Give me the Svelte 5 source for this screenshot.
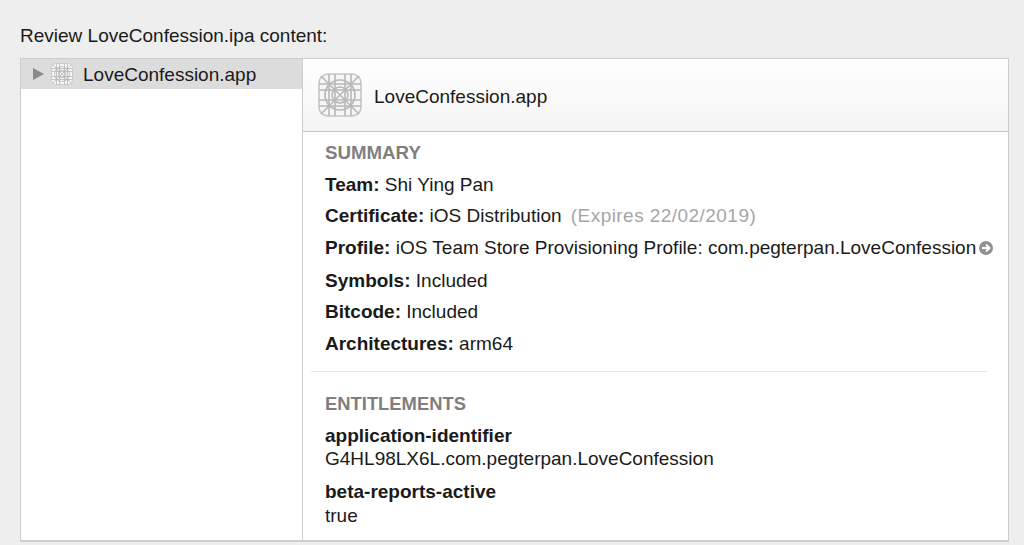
<script>
  const summary = [
    { label: 'Team:', value: 'Shi Ying Pan' },
    { label: 'Certificate:', value: 'iOS Distribution', note: '(Expires 22/02/2019)' },
    { label: 'Profile:', value: 'iOS Team Store Provisioning Profile: com.pegterpan.LoveConfession', link: true },
    { label: 'Symbols:', value: 'Included' },
    { label: 'Bitcode:', value: 'Included' },
    { label: 'Architectures:', value: 'arm64' }
  ];
  const entitlements = [
    { key: 'application-identifier', value: 'G4HL98LX6L.com.pegterpan.LoveConfession' },
    { key: 'beta-reports-active', value: 'true' }
  ];
</script>

{#snippet appIcon(size)}
  <svg class="app-icon" width={size} height={size} viewBox="0 0 44 44" fill="none" stroke="#b8b8b8" stroke-width="1.6">
    <rect x="1" y="1" width="42" height="42" rx="9" fill="#f6f6f6" stroke="#c6c6c6" />
    <path d="M1 11H43M1 17H43M1 27H43M1 33H43M11 1V43M17 1V43M27 1V43M33 1V43M3 3L41 41M41 3L3 41" />
    <circle cx="22" cy="22" r="15" />
    <circle cx="22" cy="22" r="8" />
  </svg>
{/snippet}

<div class="page">
  <p class="heading">Review LoveConfession.ipa content:</p>
  <div class="panel">
    <aside class="sidebar">
      <div class="tree-row">
        <span class="disclosure"></span>
        {@render appIcon(22)}
        <span class="tree-label">LoveConfession.app</span>
      </div>
    </aside>
    <section class="detail">
      <header class="detail-head">
        {@render appIcon(44)}
        <span class="detail-name">LoveConfession.app</span>
      </header>
      <div class="detail-body">
        <h2 class="section-title">SUMMARY</h2>
        {#each summary as row}
          <div class="row" class:after-link={row.label === 'Symbols:'}>
            <b>{row.label}</b> {row.value}
            {#if row.note}<span class="note">{row.note}</span>{/if}
            {#if row.link}
              <svg class="go" width="14" height="14" viewBox="0 0 14 14">
                <circle cx="7" cy="7" r="7" fill="#929292" />
                <path d="M3 7H10M7 3.6L10.4 7L7 10.4" fill="none" stroke="#fff" stroke-width="2" />
              </svg>
            {/if}
          </div>
        {/each}
        <hr class="divider" />
        <h2 class="section-title second">ENTITLEMENTS</h2>
        {#each entitlements as item}
          <div class="entitlement">
            <b>{item.key}</b>
            <span>{item.value}</span>
          </div>
        {/each}
      </div>
    </section>
  </div>
</div>

<style>
  :global(body) {
    background: #eeeeee;
  }
  .page {
    height: 545px;
    box-sizing: border-box;
    padding: 25px 15px 0 20px;
    font-family: "Liberation Sans", Arial, sans-serif;
    font-size: 19px;
    color: #1a1a1a;
    overflow: hidden;
  }
  .heading {
    margin: 0 0 12px;
    line-height: 21px;
  }
  .panel {
    display: grid;
    grid-template-columns: 282px 1fr;
    box-sizing: border-box;
    height: 484px;
    background: #fff;
    border: 1px solid #cdcdcd;
    border-width: 1px 1px 2px 1px;
  }
  .sidebar {
    border-right: 1px solid #cdcdcd;
  }
  .detail {
    min-width: 0;
  }
  .tree-row {
    display: flex;
    align-items: center;
    height: 30px;
    padding-left: 12px;
    background: #dcdcdc;
  }
  .disclosure {
    width: 0;
    height: 0;
    border-left: 11px solid #8a8a8a;
    border-top: 6px solid transparent;
    border-bottom: 6px solid transparent;
    margin-right: 7px;
  }
  .tree-label {
    margin-left: 10px;
    padding-top: 2px;
  }
  .detail-head {
    display: flex;
    align-items: center;
    gap: 12px;
    height: 72px;
    padding-left: 15px;
    background: linear-gradient(#ffffff, #f4f4f4);
    border-bottom: 1px solid #c9c9c9;
  }
  .detail-name {
    padding-top: 3px;
  }
  .detail-body {
    padding: 10px 21px 0 22px;
  }
  .section-title {
    margin: 0;
    font-size: 18.7px;
    line-height: 21px;
    font-weight: 700;
    color: #7f7f7f;
  }
  .second {
    font-size: 18.4px;
    margin-bottom: 1px;
  }
  .row {
    line-height: 21px;
    margin-top: 10.6px;
    white-space: nowrap;
  }
  .after-link {
    margin-top: 12px;
  }
  .note {
    color: #a6a6a6;
    margin-left: 4px;
    letter-spacing: 0.45px;
  }
  .go {
    margin-left: -3px;
    vertical-align: -1px;
  }
  .divider {
    border: 0;
    border-top: 1px solid #e6e6e6;
    margin: 17px 0 21px -14px;
  }
  .entitlement {
    display: flex;
    flex-direction: column;
    line-height: 23.5px;
    margin-top: 10px;
  }
  .entitlement + .entitlement {
    margin-top: 9.5px;
  }
</style>
